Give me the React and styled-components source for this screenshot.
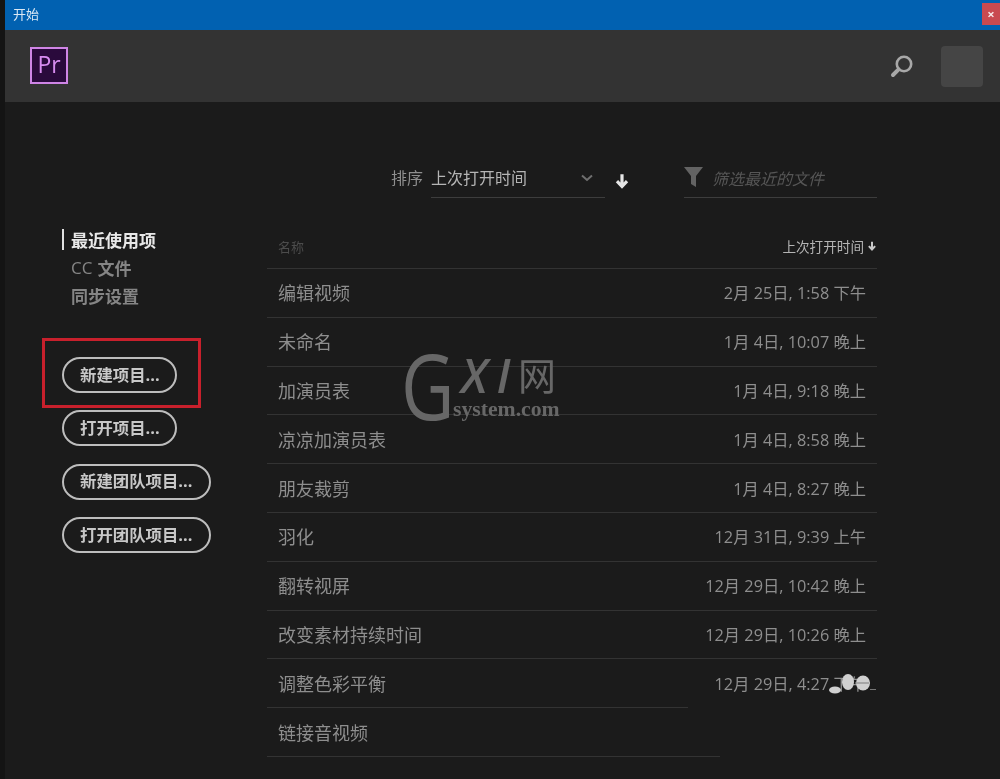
import React from "react";
import styled, { createGlobalStyle } from "styled-components";

const Global = createGlobalStyle`
  html, body { margin: 0; padding: 0; background: #1b1b1b; }
  body { font-family: "Open Sans", "Noto Sans CJK SC", sans-serif; }
`;
const Page = styled.div`
  position: relative; width: 1000px; height: 779px; overflow: hidden;
  display: flex; background: #1b1b1b; filter: blur(0.35px);
`;
const Strip = styled.div`width: 5px; flex: none; background: #141414;`;
const Main = styled.div`flex: 1; display: flex; flex-direction: column; min-width: 0;`;
const TitleBar = styled.div`
  height: 30px; flex: none; background: #0161b1; display: flex; align-items: center;
  justify-content: space-between; padding-left: 8px; color: #dbe8f4; font-size: 13px; line-height: 28px;
`;
const TitleText = styled.span`margin-bottom: 3px;`;
const CloseBtn = styled.div`
  width: 18px; height: 22px; margin-bottom: 3px; background: #c94a50; color: #f6e6e6;
  display: flex; align-items: center; justify-content: center; font-size: 13px; font-weight: 700;
`;
const Header = styled.header`
  height: 72px; flex: none; background: #333333; display: flex; align-items: center;
  justify-content: space-between; padding: 0 17px 0 25px;
`;
const Logo = styled.div`
  width: 38px; height: 37px; box-sizing: border-box; border: 2px solid #cf85e6; background: #2a0a3c;
  color: #d88df0; font: 500 23px/31px "Open Sans", sans-serif; text-align: center; margin-bottom: 2px;
`;
const HeaderRight = styled.div`display: flex; align-items: center; gap: 27px;`;
const Avatar = styled.div`width: 42px; height: 41px; border-radius: 4px; background: #454545;`;
const Body = styled.div`flex: 1; display: flex; min-height: 0;`;
const Side = styled.aside`width: 262px; flex: none; padding: 123.4px 0 0 57px; box-sizing: border-box;`;
const Nav = styled.nav`display: flex; flex-direction: column; margin-bottom: 47.6px;`;
const NavItem = styled.div`
  height: 28px; display: flex; align-items: center; gap: 5px; padding-left: 9px; font-size: 17px; font-weight: 700;
  color: ${p => (p.$active ? "#e8e8e8" : "#858585")}; position: relative;
  &::before {
    content: ""; display: ${p => (p.$active ? "block" : "none")}; position: absolute; left: 0; top: 4px;
    width: 2px; height: 21px; background: #e0e0e0;
  }
`;
const NavLatin = styled.span`font-weight: 400;`;
const Buttons = styled.div`display: flex; flex-direction: column; align-items: flex-start; gap: 17.33px;`;
const Pill = styled.button`
  height: 36px; width: ${p => p.$w}px; box-sizing: border-box; border: 2px solid #bdbdbd; border-radius: 18px;
  background: transparent; color: #c8c8c8; font: 700 16.4px/1 "Open Sans", "Noto Sans CJK SC", sans-serif;
  padding: 0 0 0 16px; text-align: left; white-space: nowrap;
`;
const Content = styled.section`width: 610px; flex: none; display: flex; flex-direction: column;`;
const SortBar = styled.div`display: flex; align-items: flex-start; height: 96px; padding: 62px 0 0 124px; box-sizing: border-box;`;
const SortLabel = styled.span`font-size: 16px; line-height: 28px; color: #8f8f8f; width: 40px; flex: none;`;
const Select = styled.div`
  width: 174px; height: 34px; box-sizing: border-box; border-bottom: 1px solid #3d3d3d; flex: none;
  display: flex; justify-content: space-between; padding-right: 11px; font-size: 16px; line-height: 28px; color: #b5b5b5;
`;
const SortArrow = styled.div`width: 79px; flex: none; padding: 8px 0 0 9px; box-sizing: border-box;`;
const Filter = styled.div`
  flex: 1; height: 34px; box-sizing: border-box; border-bottom: 1px solid #3d3d3d;
  display: flex; gap: 9px; padding-top: 2px;
`;
const Placeholder = styled.span`font-size: 16px; line-height: 26px; font-style: italic; color: #565656;`;
const TableHead = styled.div`
  height: 71px; box-sizing: border-box; padding: 26px 0 0 11px; display: flex; justify-content: space-between;
  align-items: center; border-bottom: 1px solid #333;
`;
const HeadName = styled.span`font-size: 13px; color: #4c4c4c;`;
const HeadSort = styled.span`font-size: 13.6px; color: #b4b4b4; display: flex; align-items: center; gap: 3px;`;
const Row = styled.div`
  height: 47.8px; box-sizing: border-box; display: flex; justify-content: space-between; align-items: center;
  padding: 0 11px 1px; font-size: 18px; color: #8e8e8e;
`;
const RowDate = styled.span`font-size: 16.3px; color: #8e8e8e;`;
const Rule = styled.div`height: 1px; background: #333; width: ${p => p.$w || 610}px;`;
const Overlay = styled.div`position: absolute; pointer-events: none;`;
const RedBox = styled(Overlay)`
  left: 42px; top: 338px; width: 159px; height: 70px; box-sizing: border-box; border: 3px solid #c8202c;
`;
const Mark = styled(Overlay)`left: 403px; top: 345px; width: 165px; height: 85px; color: #676767;`;
const MarkG = styled.span`
  position: absolute; left: -2px; top: -6px; font: 500 92px/92px "Open Sans", sans-serif;
  transform: scaleX(0.8); transform-origin: 0 50%;
`;
const MarkXI = styled.span`position: absolute; left: 58px; top: 12px; font: italic 600 47px/36px "Open Sans", sans-serif; letter-spacing: 9px;`;
const MarkNet = styled.span`position: absolute; left: 115px; top: 7px; font: 38px/44px "Noto Sans CJK SC", sans-serif;`;
const MarkSub = styled.span`position: absolute; left: 50px; top: 53px; font: 700 21.7px/22px "Liberation Serif", serif;`;
const Blobs = styled.svg`position: absolute; left: 825px; top: 670px;`;

const rows = [
  ["编辑视频", "2月 25日, 1:58 下午"], ["未命名", "1月 4日, 10:07 晚上"], ["加演员表", "1月 4日, 9:18 晚上"],
  ["凉凉加演员表", "1月 4日, 8:58 晚上"], ["朋友裁剪", "1月 4日, 8:27 晚上"], ["羽化", "12月 31日, 9:39 上午"],
  ["翻转视屏", "12月 29日, 10:42 晚上"], ["改变素材持续时间", "12月 29日, 10:26 晚上"],
  ["调整色彩平衡", "12月 29日, 4:27 下午", 421], ["链接音视频", "", 453],
];
const pills = [["新建项目...", 115], ["打开项目...", 115], ["新建团队项目...", 149], ["打开团队项目...", 149]];
const DownArrow = ({ s = 14, c = "#e6e6e6" }) => (
  <svg width={s} height={s} viewBox="0 0 14 14"><path d="M7 1v10.5M2.6 7.2 7 11.8l4.4-4.6" fill="none" stroke={c} strokeWidth="2.8" /></svg>
);

export default function App() {
  return (
    <Page>
      <Global />
      <Strip />
      <Main>
        <TitleBar><TitleText>开始</TitleText><CloseBtn>×</CloseBtn></TitleBar>
        <Header>
          <Logo>Pr</Logo>
          <HeaderRight>
            <svg width="24" height="24" viewBox="0 0 24 24" fill="none" stroke="#a8a8a8">
              <circle cx="14" cy="10" r="7.2" strokeWidth="2.6" />
              <path d="M8.6 15.4 3 21" strokeWidth="4" strokeLinecap="round" />
            </svg>
            <Avatar />
          </HeaderRight>
        </Header>
        <Body>
          <Side>
            <Nav>
              <NavItem $active>最近使用项</NavItem>
              <NavItem><NavLatin>CC</NavLatin>文件</NavItem>
              <NavItem>同步设置</NavItem>
            </Nav>
            <Buttons>{pills.map(([t, w]) => <Pill key={t} $w={w}>{t}</Pill>)}</Buttons>
          </Side>
          <Content>
            <SortBar>
              <SortLabel>排序</SortLabel>
              <Select>
                上次打开时间
                <svg width="14" height="28" viewBox="0 0 14 28"><path d="M2 11.5 7 16l5-4.5" fill="none" stroke="#6f6f6f" strokeWidth="2" /></svg>
              </Select>
              <SortArrow><DownArrow s={16} /></SortArrow>
              <Filter>
                <svg width="19" height="20" viewBox="0 0 19 20" style={{ marginTop: 1 }}><path d="M0 0h19l-7 9v11l-5-3V9z" fill="#636363" /></svg>
                <Placeholder>筛选最近的文件</Placeholder>
              </Filter>
            </SortBar>
            <TableHead>
              <HeadName>名称</HeadName>
              <HeadSort>上次打开时间<DownArrow s={10} c="#c8c8c8" /></HeadSort>
            </TableHead>
            {rows.map(([n, d, w]) => (
              <React.Fragment key={n}>
                <Row>{n}<RowDate>{d}</RowDate></Row>
                <Rule $w={w} />
              </React.Fragment>
            ))}
          </Content>
        </Body>
      </Main>
      <RedBox />
      <Mark>
        <MarkG>G</MarkG><MarkXI>XI</MarkXI><MarkNet>网</MarkNet><MarkSub>system.com</MarkSub>
      </Mark>
      <Blobs width="52" height="32" viewBox="0 0 52 32">
        <ellipse cx="10" cy="20" rx="6" ry="3.5" fill="#d0d0d0" />
        <ellipse cx="23" cy="12" rx="6" ry="8" fill="#d0d0d0" />
        <ellipse cx="38" cy="13" rx="7" ry="7.5" fill="#d0d0d0" />
        <path d="M30 13h14" stroke="#8a8a8a" strokeWidth="1.2" />
        <path d="M45 19.5h6" stroke="#777" strokeWidth="1" />
      </Blobs>
    </Page>
  );
}
